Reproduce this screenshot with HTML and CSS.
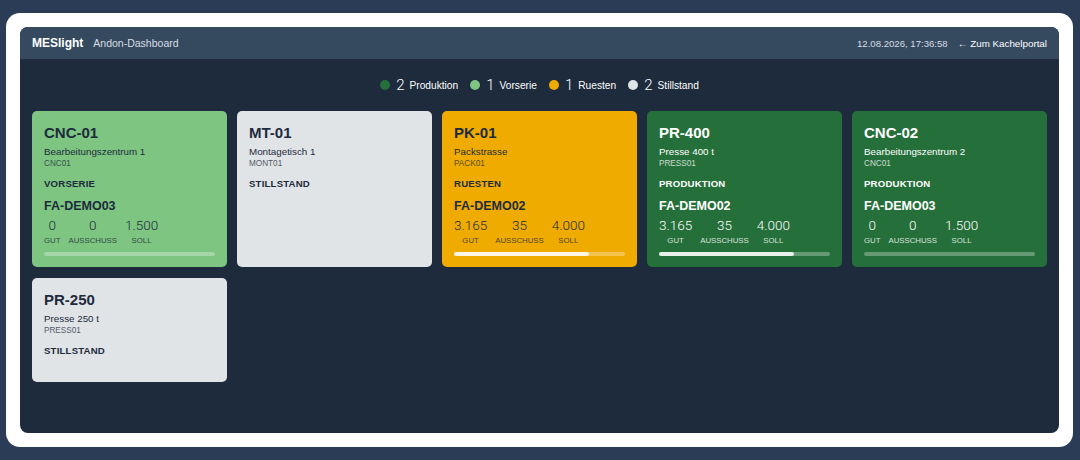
FILE: index.html
```html
<!DOCTYPE html>
<html lang="de">
<head>
  <meta charset="UTF-8">
  <title>MESlight Andon-Dashboard</title>
  <link rel="stylesheet" href="styles.css">
</head>
<body>

  <div class="frame">
    <div class="app">
      <header class="topbar">
        <div class="brand">
          <span class="logo">MESlight</span>
          <span class="subtitle">Andon-Dashboard</span>
        </div>
        <div class="meta">
          <span class="clock">12.08.2026, 17:36:58</span>
          <a class="back" href="#">&larr; Zum Kachelportal</a>
        </div>
      </header>

      <main class="content">
        <div class="legend">
          <span class="legend-item"><i class="dot prod"></i><b>2</b>Produktion</span>
          <span class="legend-item"><i class="dot vor"></i><b>1</b>Vorserie</span>
          <span class="legend-item"><i class="dot rue"></i><b>1</b>Ruesten</span>
          <span class="legend-item"><i class="dot still"></i><b>2</b>Stillstand</span>
        </div>

        <div class="grid">
          <div class="card vorserie">
            <div class="title">CNC-01</div>
            <div class="desc">Bearbeitungszentrum 1</div>
            <div class="code">CNC01</div>
            <div class="status">VORSERIE</div>
            <div class="order">FA-DEMO03</div>
            <div class="stats">
              <div class="stat"><span class="num">0</span><span class="lbl">GUT</span></div>
              <div class="stat"><span class="num">0</span><span class="lbl">AUSSCHUSS</span></div>
              <div class="stat"><span class="num">1.500</span><span class="lbl">SOLL</span></div>
            </div>
            <div class="bar"><div class="fill" style="width:0%"></div></div>
          </div>

          <div class="card stillstand">
            <div class="title">MT-01</div>
            <div class="desc">Montagetisch 1</div>
            <div class="code">MONT01</div>
            <div class="status">STILLSTAND</div>
          </div>

          <div class="card ruesten">
            <div class="title">PK-01</div>
            <div class="desc">Packstrasse</div>
            <div class="code">PACK01</div>
            <div class="status">RUESTEN</div>
            <div class="order">FA-DEMO02</div>
            <div class="stats">
              <div class="stat"><span class="num">3.165</span><span class="lbl">GUT</span></div>
              <div class="stat"><span class="num">35</span><span class="lbl">AUSSCHUSS</span></div>
              <div class="stat"><span class="num">4.000</span><span class="lbl">SOLL</span></div>
            </div>
            <div class="bar"><div class="fill" style="width:79%"></div></div>
          </div>

          <div class="card produktion">
            <div class="title">PR-400</div>
            <div class="desc">Presse 400 t</div>
            <div class="code">PRESS01</div>
            <div class="status">PRODUKTION</div>
            <div class="order">FA-DEMO02</div>
            <div class="stats">
              <div class="stat"><span class="num">3.165</span><span class="lbl">GUT</span></div>
              <div class="stat"><span class="num">35</span><span class="lbl">AUSSCHUSS</span></div>
              <div class="stat"><span class="num">4.000</span><span class="lbl">SOLL</span></div>
            </div>
            <div class="bar"><div class="fill" style="width:79%"></div></div>
          </div>

          <div class="card produktion">
            <div class="title">CNC-02</div>
            <div class="desc">Bearbeitungszentrum 2</div>
            <div class="code">CNC01</div>
            <div class="status">PRODUKTION</div>
            <div class="order">FA-DEMO03</div>
            <div class="stats">
              <div class="stat"><span class="num">0</span><span class="lbl">GUT</span></div>
              <div class="stat"><span class="num">0</span><span class="lbl">AUSSCHUSS</span></div>
              <div class="stat"><span class="num">1.500</span><span class="lbl">SOLL</span></div>
            </div>
            <div class="bar"><div class="fill" style="width:0%"></div></div>
          </div>

          <div class="card stillstand">
            <div class="title">PR-250</div>
            <div class="desc">Presse 250 t</div>
            <div class="code">PRESS01</div>
            <div class="status">STILLSTAND</div>
          </div>
        </div>
      </main>
    </div>
  </div>

</body>
</html>
```

FILE: styles.css
```css
body {
  margin: 0;
  padding: 13px 7px 13px 6px;
  background: #2b3d56;
  font-family: "Liberation Sans", Arial, sans-serif;
  color: #1d2b3c;
}
.frame {
  background: #fff;
  border-radius: 14px;
  padding: 14px;
}
.app {
  height: 406px;
  background: #1d2b3c;
  border-radius: 8px;
  overflow: hidden;
}

/* header */
.topbar {
  height: 32px;
  background: #354a5f;
  display: flex;
  align-items: center;
  justify-content: space-between;
  padding: 0 12px;
}
.brand, .meta {
  display: flex;
  align-items: center;
}
.logo {
  color: #fff;
  font-weight: bold;
  font-size: 12px;
  margin-right: 10px;
}
.subtitle {
  color: #d7dee5;
  font-size: 10.5px;
}
.clock {
  color: #d7dee5;
  font-size: 9.6px;
  margin-right: 10px;
}
.back {
  color: #fff;
  font-size: 9.8px;
  text-decoration: none;
}

/* legend */
.content {
  padding: 16px 12px;
}
.legend {
  display: flex;
  justify-content: center;
  align-items: center;
  height: 20px;
  margin-bottom: 16px;
  color: #fff;
  font-size: 10.2px;
}
.legend-item {
  display: flex;
  align-items: center;
  margin: 0 6px;
}
.legend-item b {
  font-family: Roboto, sans-serif;
  font-weight: 300;
  font-size: 15px;
  margin: 0 5px 0 6px;
}
.dot {
  width: 10px;
  height: 10px;
  border-radius: 50%;
}
.dot.prod { background: #256f3a; }
.dot.vor { background: #7dc581; }
.dot.rue { background: #f0ab00; }
.dot.still { background: #e1e4e7; }

/* cards */
.grid {
  display: grid;
  grid-template-columns: repeat(5, 1fr);
  gap: 11px 10px;
}
.card {
  border-radius: 5px;
  padding: 12px 12px 11px;
  min-height: 81px;
}
.card.vorserie { background: #7dc581; }
.card.stillstand { background: #e1e4e7; }
.card.ruesten { background: #f0ab00; }
.card.produktion { background: #256f3a; color: #fff; }

.title {
  font-size: 15px;
  font-weight: bold;
  line-height: 20px;
}
.desc {
  font-size: 9.8px;
  line-height: 13px;
  margin-top: 2px;
}
.code {
  font-size: 8.2px;
  line-height: 11px;
  opacity: 0.75;
}
.status {
  font-size: 9.6px;
  font-weight: bold;
  line-height: 13px;
  margin-top: 8px;
  letter-spacing: 0.2px;
}
.order {
  font-size: 12.5px;
  font-weight: bold;
  line-height: 15px;
  margin-top: 9px;
}
.stats {
  display: flex;
  gap: 8px;
  margin-top: 3px;
}
.stat {
  display: flex;
  flex-direction: column;
  align-items: center;
}
.num {
  font-family: Roboto, sans-serif;
  font-weight: 300;
  font-size: 13.5px;
  line-height: 17px;
}
.lbl {
  font-size: 7.8px;
  line-height: 10px;
  margin-top: 2px;
  opacity: 0.8;
}
.bar {
  height: 4px;
  margin-top: 6px;
  border-radius: 2px;
  background: rgba(255, 255, 255, 0.3);
}
.fill {
  height: 100%;
  border-radius: 2px;
  background: rgba(255, 255, 255, 0.85);
}
```
